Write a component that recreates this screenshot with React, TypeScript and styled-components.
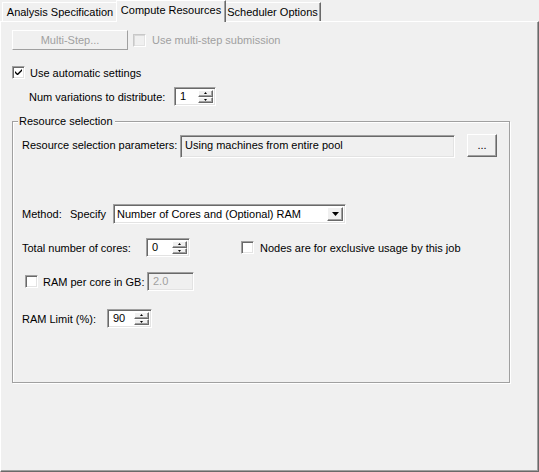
import React from 'react'
import styled, { createGlobalStyle } from 'styled-components'

const Global = createGlobalStyle`
  html, body { margin: 0; padding: 0; background: #f0f0f0; }
  body { font-family: "Liberation Sans", Arial, sans-serif; font-size: 11px; color: #000; }
`;

const Window = styled.div`
  width: 539px;
  height: 472px;
  background: #f0f0f0;
  display: flex;
  flex-direction: column;
  overflow: hidden;
`;

const TabStrip = styled.div`
  display: flex;
  align-items: flex-end;
  height: 21px;
  padding-left: 2px;
`;

const Tab = styled.div<{ $w: number; $active?: boolean }>`
  position: relative;
  box-sizing: border-box;
  width: ${p => p.$w}px;
  height: ${p => (p.$active ? 22 : 19)}px;
  margin: 0 ${p => (p.$active ? -2 : 0)}px ${p => (p.$active ? -1 : 0)}px;
  z-index: ${p => (p.$active ? 2 : 1)};
  background: #f0f0f0;
  border-top: 1px solid #fff;
  border-left: 1px solid #fff;
  border-right: 1px solid #696969;
  box-shadow: inset -1px 0 0 #a0a0a0;
  display: flex;
  justify-content: center;
  padding-top: 3px;
  white-space: nowrap;
`;

const Page = styled.div`
  box-sizing: border-box;
  height: 451px;
  border-top: 1px solid #fff;
  border-left: 1px solid #fff;
  border-right: 1px solid #696969;
  border-bottom: 1px solid #696969;
  box-shadow: inset -1px -1px 0 #a0a0a0;
  display: flex;
  flex-direction: column;
`;

const Row = styled.div<{ $top: number; $left?: number; $start?: boolean }>`
  display: flex;
  align-items: ${p => (p.$start ? 'flex-start' : 'center')};
  margin-top: ${p => p.$top}px;
  padding-left: ${p => p.$left ?? 0}px;
  white-space: nowrap;
`;

const Label = styled.span<{ $w?: number; $disabled?: boolean; $mt?: number }>`
  ${p => (p.$w ? `width: ${p.$w}px; flex: none;` : '')}
  margin-top: ${p => p.$mt ?? 0}px;
  color: ${p => (p.$disabled ? '#a0a0a0' : '#000')};
`;

const Button = styled.div<{ $w: number; $h: number; $disabled?: boolean; $ml?: number }>`
  box-sizing: border-box;
  flex: none;
  width: ${p => p.$w}px;
  height: ${p => p.$h}px;
  margin-left: ${p => p.$ml ?? 0}px;
  display: flex;
  align-items: center;
  justify-content: center;
  background: #f0f0f0;
  border-top: 1px solid #fff;
  border-left: 1px solid #fff;
  border-right: 1px solid ${p => (p.$disabled ? '#a0a0a0' : '#696969')};
  border-bottom: 1px solid ${p => (p.$disabled ? '#a0a0a0' : '#696969')};
  box-shadow: ${p => (p.$disabled ? 'none' : 'inset -1px -1px 0 #a0a0a0')};
  color: ${p => (p.$disabled ? '#a0a0a0' : '#000')};
  padding-bottom: 1px;
`;

const Box = styled.div<{ $disabled?: boolean }>`
  box-sizing: border-box;
  flex: none;
  width: 13px;
  height: 13px;
  background: ${p => (p.$disabled ? '#f0f0f0' : '#fff')};
  border-top: 1px solid ${p => (p.$disabled ? '#c8c8c8' : '#a0a0a0')};
  border-left: 1px solid ${p => (p.$disabled ? '#c8c8c8' : '#a0a0a0')};
  border-right: 1px solid #fff;
  border-bottom: 1px solid #fff;
  box-shadow: inset 1px 1px 0 ${p => (p.$disabled ? '#d8d8d8' : '#696969')},
    inset -1px -1px 0 #e3e3e3;
  display: flex;
  align-items: center;
  justify-content: center;
`;

const CheckWrap = styled.div<{ $gap: number; $w?: number; $ml?: number }>`
  display: flex;
  align-items: center;
  gap: ${p => p.$gap}px;
  margin-left: ${p => p.$ml ?? 0}px;
  ${p => (p.$w ? `width: ${p.$w}px; flex: none;` : '')}
`;

function Check({ label, checked, disabled, gap = 6, w, ml }: { label: string; checked?: boolean; disabled?: boolean; gap?: number; w?: number; ml?: number }) {
  return (
    <CheckWrap $gap={gap} $w={w} $ml={ml}>
      <Box $disabled={disabled}>
        {checked && (
          <svg width="7" height="7" viewBox="0 0 7 7">
            <path d="M0 2 L0 4 L2 6 L3 6 L7 2 L7 0 L2.5 4.5 Z" fill="#000" />
          </svg>
        )}
      </Box>
      <Label $disabled={disabled}>{label}</Label>
    </CheckWrap>
  );
}

const Sunken = styled.div<{ $w: number; $h: number; $bg?: string; $disabled?: boolean; $mt?: number }>`
  box-sizing: border-box;
  flex: none;
  width: ${p => p.$w}px;
  height: ${p => p.$h}px;
  margin-top: ${p => p.$mt ?? 0}px;
  background: ${p => p.$bg ?? '#fff'};
  border-top: 1px solid #a0a0a0;
  border-left: 1px solid #a0a0a0;
  border-right: 1px solid #fff;
  border-bottom: 1px solid #fff;
  box-shadow: inset 1px 1px 0 #696969, inset -1px -1px 0 #e3e3e3;
  display: flex;
  align-items: stretch;
  color: ${p => (p.$disabled ? '#a0a0a0' : '#000')};
`;

const FieldText = styled.span<{ $top?: boolean; $pl?: number }>`
  flex: 1;
  display: flex;
  align-items: ${p => (p.$top ? 'flex-start' : 'center')};
  padding-top: ${p => (p.$top ? 3 : 0)}px;
  padding-left: ${p => p.$pl ?? 5}px;
  padding-bottom: 1px;
`;

const SpinButtons = styled.div`
  width: 15px;
  display: flex;
  flex-direction: column;
  padding: 2px 2px 2px 0;
`;

const SpinBtn = styled.div`
  flex: 1;
  box-sizing: border-box;
  background: #f0f0f0;
  border-top: 1px solid #fff;
  border-left: 1px solid #fff;
  border-right: 1px solid #696969;
  border-bottom: 1px solid #696969;
  box-shadow: inset -1px -1px 0 #a0a0a0;
  display: flex;
  align-items: center;
  justify-content: center;
`;

const Arrow = ({ up, w = 5 }: { up?: boolean; w?: number }) => {
  const h = Math.ceil(w / 2);
  return (
    <svg width={w} height={h} viewBox={`0 0 ${w} ${h}`}>
      <path d={up ? `M0 ${h} L${w / 2} 0 L${w} ${h} Z` : `M0 0 L${w} 0 L${w / 2} ${h} Z`} fill="#000" />
    </svg>
  );
};

function Spin({ value, w }: { value: string; w: number }) {
  return (
    <Sunken $w={w} $h={19}>
      <FieldText>{value}</FieldText>
      <SpinButtons>
        <SpinBtn><Arrow up w={3} /></SpinBtn>
        <SpinBtn><Arrow w={3} /></SpinBtn>
      </SpinButtons>
    </Sunken>
  );
}

const DropBtn = styled(SpinBtn)`
  flex: none;
  width: 16px;
  margin: 2px 2px 2px 0;
`;

const Group = styled.div`
  position: relative;
  box-sizing: border-box;
  width: 498px;
  height: 262px;
  margin: 15px 0 0 11px;
  border: 1px solid #a0a0a0;
  box-shadow: inset 1px 1px 0 #fff, 1px 1px 0 #fff;
  display: flex;
  flex-direction: column;
`;

const Legend = styled.span`
  position: absolute;
  top: -7px;
  left: 5px;
  padding: 0 2px 0 1px;
  background: #f0f0f0;
`;

export default function App() {
  return (
    <Window>
      <Global />
      <TabStrip>
        <Tab $w={116}>Analysis Specification</Tab>
        <Tab $w={110} $active>Compute Resources</Tab>
        <Tab $w={97}>Scheduler Options</Tab>
      </TabStrip>
      <Page>
        <Row $top={8} $left={11}>
          <Button $w={116} $h={20} $disabled>Multi-Step...</Button>
          <Check label="Use multi-step submission" disabled gap={6} ml={5} />
        </Row>
        <Row $top={16} $left={11}>
          <Check label="Use automatic settings" checked gap={5} />
        </Row>
        <Row $top={8} $left={28}>
          <Label $w={145}>Num variations to distribute:</Label>
          <Spin value="1" w={42} />
        </Row>
        <Group>
          <Legend>Resource selection</Legend>
          <Row $top={12} $left={9} $start>
            <Label $w={158} $mt={5}>Resource selection parameters:</Label>
            <Sunken $w={275} $h={23} $bg="#f0f0f0" $mt={1}>
              <FieldText $top $pl={4}>Using machines from entire pool</FieldText>
            </Sunken>
            <Button $w={30} $h={23} $ml={12}>...</Button>
          </Row>
          <Row $top={46} $left={9}>
            <Label $w={48}>Method:</Label>
            <Label $w={43}>Specify</Label>
            <Sunken $w={233} $h={20}>
              <FieldText $pl={3}>Number of Cores and (Optional) RAM</FieldText>
              <DropBtn><Arrow w={7} /></DropBtn>
            </Sunken>
          </Row>
          <Row $top={14} $left={9}>
            <Label $w={124}>Total number of cores:</Label>
            <Spin value="0" w={44} />
            <Check label="Nodes are for exclusive usage by this job" gap={6} ml={51} />
          </Row>
          <Row $top={15} $left={12}>
            <Check label="RAM per core in GB:" gap={5} w={122} />
            <Sunken $w={47} $h={19} $bg="#f0f0f0" $disabled>
              <FieldText>2.0</FieldText>
            </Sunken>
          </Row>
          <Row $top={18} $left={9}>
            <Label $w={85}>RAM Limit (%):</Label>
            <Spin value="90" w={45} />
          </Row>
        </Group>
      </Page>
    </Window>
  );
}
